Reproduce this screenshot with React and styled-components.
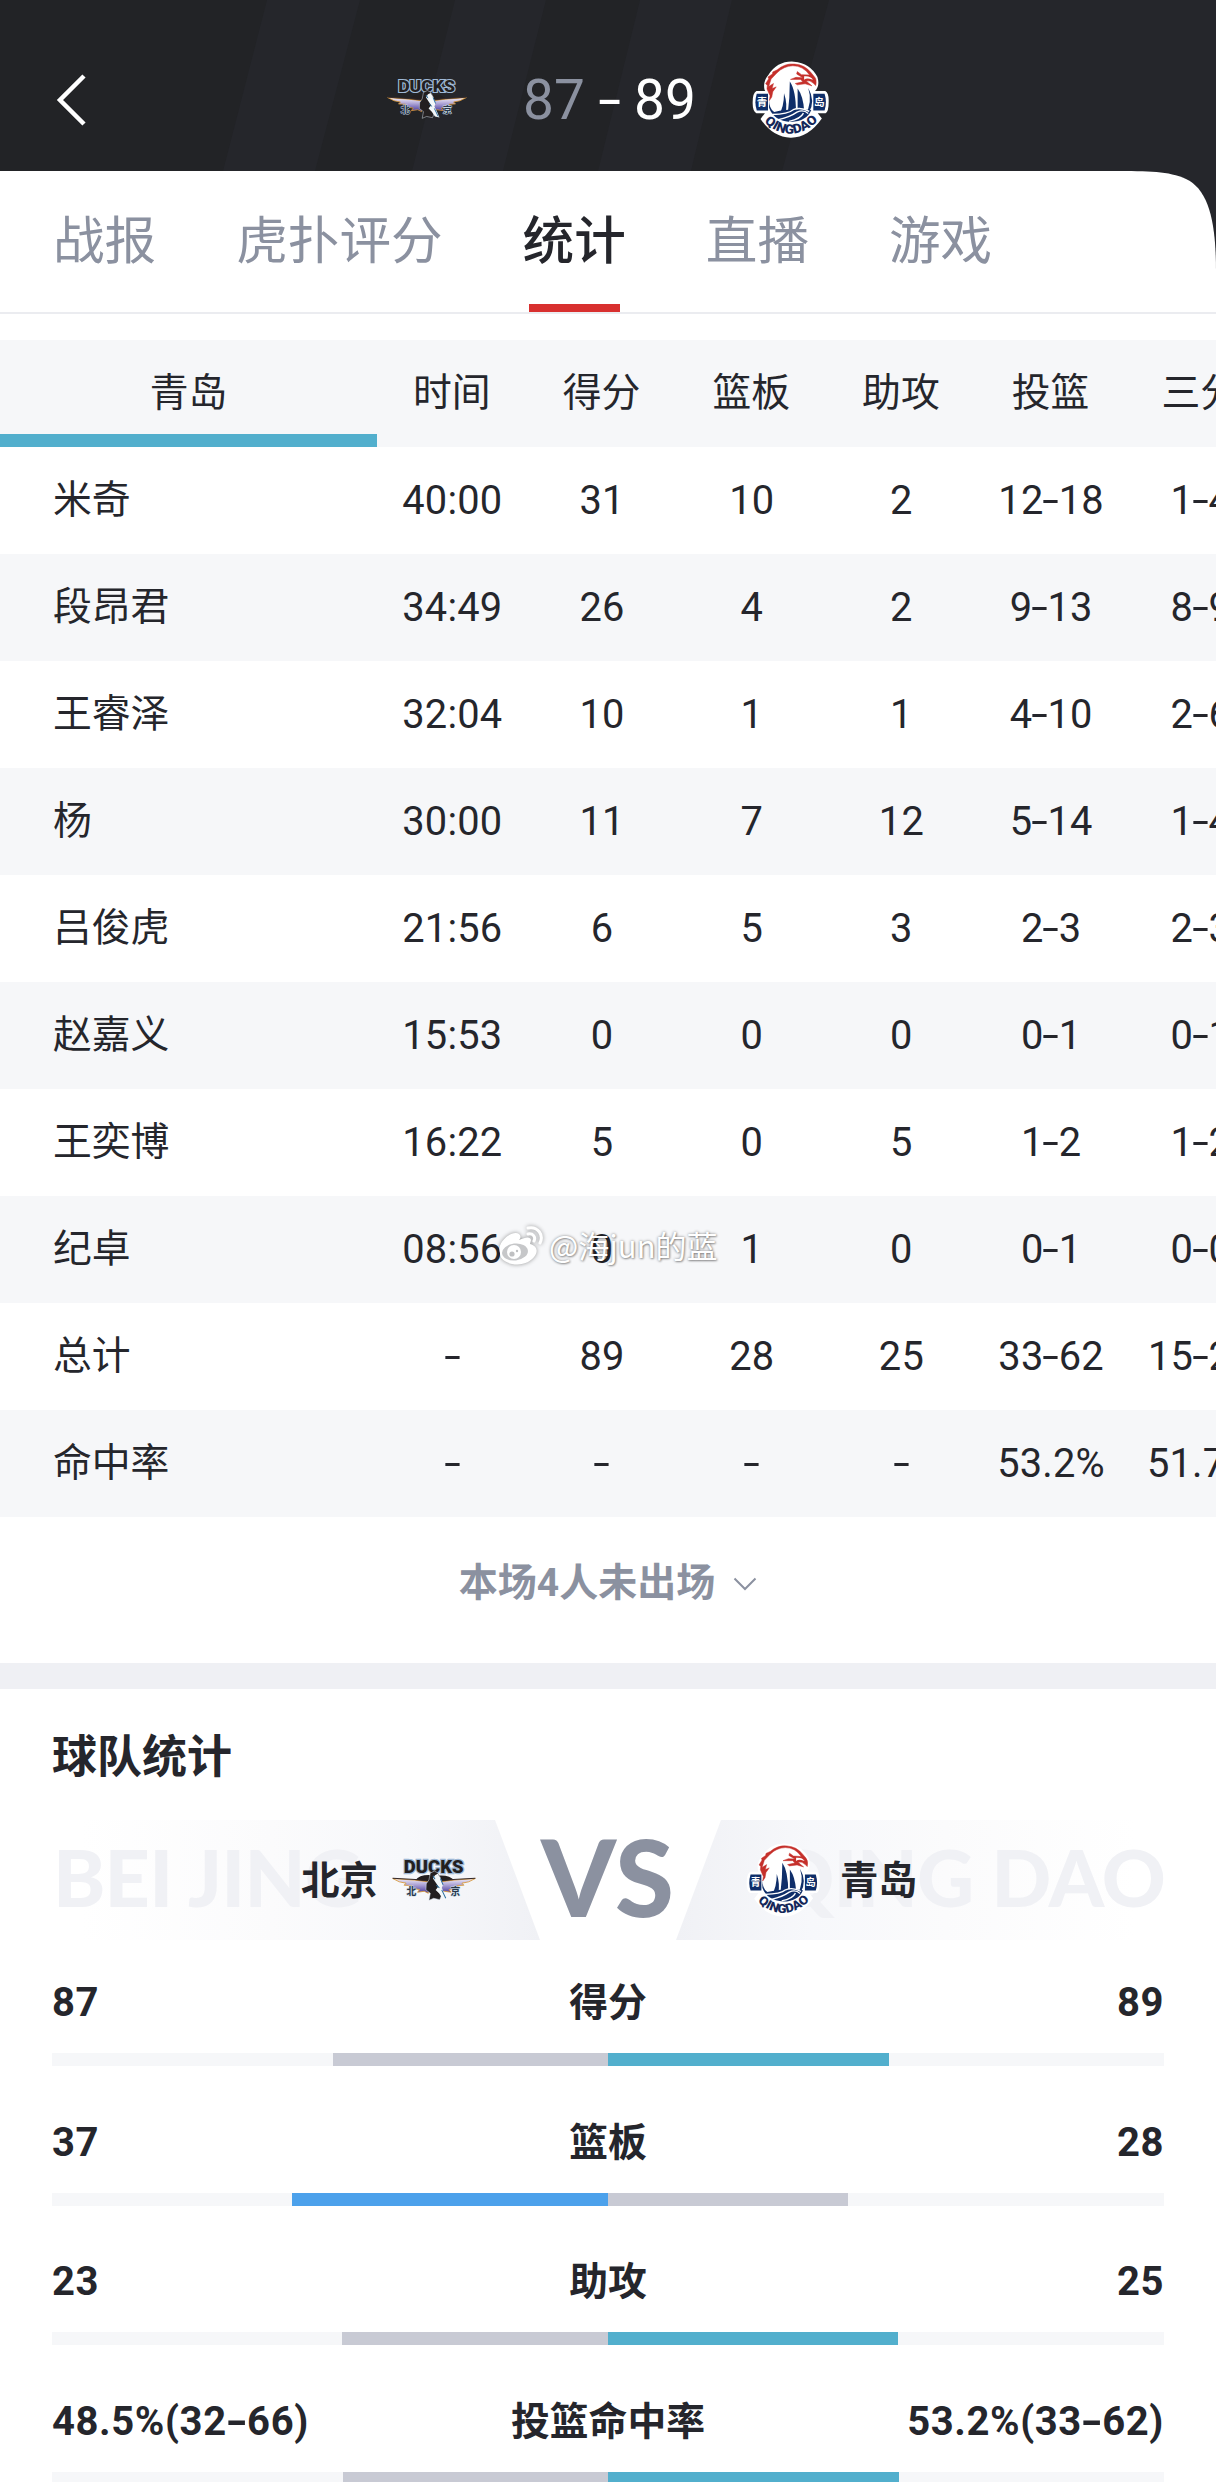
import React from 'react';
import styled, { createGlobalStyle } from 'styled-components';

const tabs = ['战报', '虎扑评分', '统计', '直播', '游戏'];

const columns = ['时间', '得分', '篮板', '助攻', '投篮', '三分'];

const players = [
  { name: '米奇', stats: ['40:00', '31', '10', '2', '12-18', '1-4'] },
  { name: '段昂君', stats: ['34:49', '26', '4', '2', '9-13', '8-9'] },
  { name: '王睿泽', stats: ['32:04', '10', '1', '1', '4-10', '2-6'] },
  { name: '杨', stats: ['30:00', '11', '7', '12', '5-14', '1-4'] },
  { name: '吕俊虎', stats: ['21:56', '6', '5', '3', '2-3', '2-3'] },
  { name: '赵嘉义', stats: ['15:53', '0', '0', '0', '0-1', '0-1'] },
  { name: '王奕博', stats: ['16:22', '5', '0', '5', '1-2', '1-2'] },
  { name: '纪卓', stats: ['08:56', '0', '1', '0', '0-1', '0-0'] },
  { name: '总计', stats: ['-', '89', '28', '25', '33-62', '15-29'] },
  { name: '命中率', stats: ['-', '-', '-', '-', '53.2%', '51.7%'] },
];

const teamStats = [
  { label: '得分', home: '87', away: '89', homeValue: 87, awayValue: 89 },
  { label: '篮板', home: '37', away: '28', homeValue: 37, awayValue: 28 },
  { label: '助攻', home: '23', away: '25', homeValue: 23, awayValue: 25 },
  { label: '投篮命中率', home: '48.5%(32-66)', away: '53.2%(33-62)', homeValue: 48.5, awayValue: 53.2 },
];

const GlobalStyle = createGlobalStyle`
  * {
    box-sizing: border-box;
  }

  body {
    margin: 0;
    background: #fff;
    color: #25262c;
    font-family: Roboto, "Noto Sans CJK SC", sans-serif;
  }
`;

const Page = styled.div`
  width: 1216px;
  height: 2482px;
  overflow: hidden;
  background: #25262b;
`;

const Header = styled.header`
  position: relative;
  height: 171px;
  background: #222326;
`;

const Stripes = styled.svg`
  position: absolute;
  top: 0;
  left: 0;
`;

const HeaderContent = styled.div`
  position: relative;
  display: grid;
  grid-template-columns: 387px 1fr 387px;
  align-items: center;
  height: 171px;
  padding-top: 28px;
`;

const BackButton = styled.button`
  display: flex;
  margin-left: 56px;
  padding: 0;
  border: 0;
  background: none;
`;

const ScoreBoard = styled.div`
  display: flex;
  align-items: center;
  justify-content: space-between;
`;

const Score = styled.div`
  display: flex;
  align-items: center;
  gap: 17px;
  color: #fff;
  font-size: 55px;
  font-weight: 400;
  line-height: 60px;
`;

const ScoreNumber = styled.span`
  color: ${({ $lost }) => ($lost ? '#8b91a0' : '#fff')};
`;

const ScoreDash = styled.span`
  display: inline-block;
  transform: scaleX(1.5);
`;

const Panel = styled.main`
  height: 2311px;
  background: #fff;
  clip-path: path('M0 0H1112C1150 0 1168 0 1186 8C1207 18 1216 46 1216 100V2311H0Z');
`;

const TabBar = styled.nav`
  display: flex;
  gap: 80px;
  height: 143px;
  padding-left: 53px;
  border-bottom: 2px solid #ebecf0;
`;

const Tab = styled.div`
  display: flex;
  flex-direction: column;
  align-items: center;
  justify-content: space-between;
  height: 141px;
  color: ${({ $active }) => ($active ? '#25262c' : '#8b91a0')};
  font-size: 51.6px;
  font-weight: ${({ $active }) => ($active ? 500 : 400)};
  line-height: 142px;

  &::after {
    content: '';
    flex: none;
    width: 91px;
    height: 8px;
    margin-top: -9px;
    background: ${({ $active }) => ($active ? '#d8302f' : 'transparent')};
  }
`;

const Table = styled.section`
  margin-top: 26px;
  overflow: hidden;
`;

const TableRow = styled.div`
  display: grid;
  grid-template-columns: 377px repeat(6, 149.7px);
  height: 107px;
  background: ${({ $shaded }) => ($shaded ? '#f6f7f9' : '#fff')};
  font-size: 38.8px;
  line-height: 106px;
`;

const TeamCell = styled.div`
  height: 107px;
  border-bottom: 13px solid #52afcd;
  text-align: center;
`;

const NameCell = styled.div`
  padding-left: 53px;
`;

const Cell = styled.div`
  text-align: center;
  white-space: nowrap;
`;

const NumberCell = styled(Cell)`
  padding-left: 1px;
  font-size: 39.8px;
  letter-spacing: 0.2px;
  line-height: 107px;
`;

const Dash = styled.span`
  display: inline-block;
  margin: 0 2px;
  transform: scaleX(1.5);
`;

const AbsentToggle = styled.div`
  display: flex;
  align-items: center;
  justify-content: center;
  gap: 18px;
  height: 146px;
  color: #8b91a0;
  font-size: 39px;
  font-weight: 700;
  line-height: 128px;

  span {
    margin-top: -14px;
  }

  svg {
    margin-top: -12px;
  }
`;

const Divider = styled.div`
  height: 26px;
  background: #eff0f4;
`;

const SectionTitle = styled.h2`
  margin: 0;
  padding-left: 52px;
  height: 131px;
  font-size: 45px;
  font-weight: 700;
  line-height: 137px;
`;

const Versus = styled.div`
  display: flex;
  justify-content: space-between;
  height: 120px;
`;

const TeamBand = styled.div`
  position: relative;
  display: flex;
  flex: none;
  flex-direction: ${({ $away }) => ($away ? 'row-reverse' : 'row')};
  align-items: center;
  justify-content: flex-end;
  gap: ${({ $away }) => ($away ? '20px' : '14px')};
  width: 540px;
  padding: ${({ $away }) => ($away ? '0 0 0 70px' : '0 64px 0 0')};
  background: linear-gradient(
    ${({ $away }) => ($away ? '270deg' : '90deg')},
    #fff 15%,
    #fbfbfc 50%,
    #f7f8fb 75%,
    #f0f1f5 100%
  );
  clip-path: ${({ $away }) =>
    $away
      ? 'polygon(45px 0, 100% 0, 100% 100%, 0 100%)'
      : 'polygon(0 0, 495px 0, 100% 100%, 0 100%)'};
`;

const Pinyin = styled.span`
  position: absolute;
  top: 9px;
  ${({ $away }) => ($away ? 'right: 51px;' : 'left: 53px;')}
  color: #f0f1f5;
  font-family: Lato, sans-serif;
  font-size: 79px;
  font-weight: 900;
  letter-spacing: -0.8px;
  line-height: 96px;
  white-space: nowrap;
`;

const TeamName = styled.span`
  position: relative;
  margin-top: -7px;
  font-size: 38.5px;
  font-weight: 700;
`;

const VersusMark = styled.div`
  color: #8b91a0;
  font-family: Lato, sans-serif;
  font-size: 107px;
  font-weight: 900;
  letter-spacing: 1px;
  line-height: 112px;
`;

const StatList = styled.div`
  padding: 0 52px;
`;

const StatItem = styled.div`
  height: 139.67px;
`;

const StatText = styled.div`
  display: grid;
  grid-template-columns: 1fr auto 1fr;
  height: 113px;
  font-size: 38.8px;
  font-weight: 700;
  line-height: 125px;
`;

const StatValue = styled.span`
  font-size: 40px;
  letter-spacing: 0.6px;
  text-align: ${({ $right }) => ($right ? 'right' : 'left')};
`;

const Bar = styled.div`
  display: grid;
  grid-template-columns: 1fr 1fr;
  height: 13px;
  background: #f6f7f9;
`;

const BarFill = styled.div`
  height: 13px;
  justify-self: ${({ $side }) => ($side === 'home' ? 'end' : 'start')};
  background: ${({ $win, $side }) => {
    if (!$win) return '#c8cad4';
    return $side === 'home' ? '#4ca1eb' : '#52afcd';
  }};
`;

const Watermark = styled.div`
  position: absolute;
  top: 1223px;
  left: 497px;
  display: flex;
  align-items: center;
  gap: 5px;
  color: #fff;
  font-family: "Noto Sans CJK SC", sans-serif;
  font-size: 31px;
  line-height: 44px;
  text-shadow: 0 0 3px rgba(0, 0, 0, 0.45), 1px 1px 2px rgba(0, 0, 0, 0.3);
  white-space: nowrap;

  svg {
    filter: drop-shadow(0 0 2px rgba(0, 0, 0, 0.4));
  }
`;

const Logo = styled.svg`
  position: relative;
  flex: none;
  overflow: visible;
`;

const DucksLogo = ({ width }) => (
  <Logo width={width} height={width * 0.504} viewBox="36 88 250 126">
    <defs>
      <linearGradient id="wing" x1="0" y1="0" x2="0" y2="1">
        <stop offset="0" stopColor="#f4eff8" />
        <stop offset="0.45" stopColor="#aaa0d4" />
        <stop offset="1" stopColor="#43349a" />
      </linearGradient>
    </defs>
    <path d="M105 152Q118 135 148 136L160 128L176 137Q208 135 222 152L180 160H145Z" fill="#231f20" />
    <path
      d="M38 146L104 151L145 156L144 190L132 184L112 187L118 179L88 174L94 167L72 166L78 160L58 156Z"
      fill="url(#wing)"
      stroke="#d89632"
      strokeWidth="2.5"
    />
    <path
      d="M284 146L218 151L180 156L180 190L192 184L212 187L206 179L236 174L230 167L250 166L244 160L264 156Z"
      fill="url(#wing)"
      stroke="#d89632"
      strokeWidth="2.5"
    />
    <path d="M38 145L105 149L140 153M284 145L218 149L184 153" fill="none" stroke="#34292b" strokeWidth="3" />
    <text
      x="71"
      y="130"
      textLength="178"
      lengthAdjust="spacingAndGlyphs"
      fill="#231f20"
      stroke="#9fb9d7"
      strokeWidth="7"
      paintOrder="stroke"
      fontFamily="Roboto, sans-serif"
      fontSize="53"
      fontWeight="900"
    >
      DUCKS
    </text>
    <path
      d="M150 130L162 124L172 129L180 144L176 158L184 174L186 190L178 209L160 205L146 211L150 190L137 180L138 162L146 150Z"
      fill="#231f20"
      stroke="#d8e2ec"
      strokeWidth="1.5"
    />
    <path
      d="M164 136L172 132L181 146L188 164L184 174L193 192L200 208L186 205L176 190L166 180L174 170L166 158L158 146Z"
      fill="#f3f7f9"
    />
    <path d="M158 138L164 148M180 146L188 165M184 180L196 205M168 166L177 174" fill="none" stroke="#286b9d" strokeWidth="3" />
    <g fill="#26374c" stroke="#c7d6e4" strokeWidth="3" paintOrder="stroke" fontFamily="'Noto Sans CJK SC', sans-serif" fontSize="29" fontWeight="700">
      <text x="79" y="195">北</text>
      <text x="210" y="195">京</text>
    </g>
  </Logo>
);

const QingdaoLogo = ({ width }) => (
  <Logo width={width} height={width} viewBox="37 37 226 226">
    <defs>
      <path id="nameArc" d="M69 213Q150 288 231 213" />
    </defs>
    {/* white backing behind the badge */}
    <path
      d="M74 122Q68 98 85 78Q112 36 160 39Q208 43 229 84Q237 110 222 125H252Q263 130 262 157Q262 186 253 190H230L242 206Q202 263 150 262Q98 261 62 207L75 190H50Q38 184 39 157Q39 131 50 125H76Z"
      fill="#fff"
    />
    <g fill="#0f2e69">
      <path d="M51 133H84V182H51Q43 158 51 133Z" />
      <path d="M217 133H250Q258 158 250 182H217Z" />
    </g>
    <g fill="#fff" fontFamily="'Noto Sans CJK SC', sans-serif" fontSize="31" fontWeight="700">
      <text x="51" y="169">青</text>
      <text x="219" y="169">岛</text>
    </g>
    <ellipse cx="150" cy="158" rx="64" ry="57" fill="#fff" />
    <path d="M202 116Q224 154 204 188L192 199Q216 158 202 116Z" fill="#0f2e69" />
    <path d="M87 150Q87 176 102 187Q150 174 211 181Q198 214 151 216Q101 213 87 174Z" fill="#0f2e69" />
    <path d="M148 97Q166 123 166 187L142 191Q148 145 148 97Z" fill="#0f2e69" />
    <path d="M131 132Q142 165 135 192L115 197Q131 174 131 132Z" fill="#0f2e69" />
    <path d="M171 118Q187 140 190 182L171 185Z" fill="#0f2e69" />
    <path d="M96 194Q143 193 158 180Q180 171 205 185M115 209Q149 201 169 187Q188 178 202 191M146 214Q180 207 188 190" fill="none" stroke="#fff" strokeWidth="4" />
    {/* eagle head: thin outline, heavier feathers at the neck */}
    <path
      d="M90 139L81 119L82 108L77 104L86 89L84 84L97 75L98 69L111 63Q134 43 162 46Q192 48 210 71L220 83Q228 91 224 109L217 102Q207 92 196 96L213 110L193 104L170 107L164 103L186 98L180 91L150 91L166 85L186 86L168 75L170 68L182 77L206 78Q187 51 157 51Q130 52 110 72L93 90L86 112L100 103L96 118L108 113L98 127L95 143L88 153Z"
      fill="#c5302b"
      stroke="#c5302b"
      strokeWidth="1.5"
    />
    <path d="M190 82Q209 80 216 92L206 89Q196 87 190 92Z" fill="#fff" />
    <text fill="#142759" fontFamily="Roboto, sans-serif" fontSize="38" fontWeight="900">
      <textPath href="#nameArc" startOffset="5" textLength="178" lengthAdjust="spacingAndGlyphs">QINGDAO</textPath>
    </text>
  </Logo>
);

// dashes between numbers are drawn wider than the font's hyphen
const getNumbers = (text) => text.split(/(-)/).map((part, idx) => (
  part === '-' ? <Dash key={idx}>-</Dash> : part
));

const App = () => {
  const getRows = () => players.map((player, idx) => (
    <TableRow key={player.name} $shaded={idx % 2 === 1}>
      <NameCell>{player.name}</NameCell>
      {player.stats.map((stat, i) => <NumberCell key={i}>{getNumbers(stat)}</NumberCell>)}
    </TableRow>
  ));

  const getStats = () => teamStats.map(({ label, home, away, homeValue, awayValue }) => {
    const total = homeValue + awayValue;
    return (
      <StatItem key={label}>
        <StatText>
          <StatValue>{getNumbers(home)}</StatValue>
          <span>{label}</span>
          <StatValue $right>{getNumbers(away)}</StatValue>
        </StatText>
        <Bar>
          <BarFill $side="home" $win={homeValue > awayValue} style={{ width: `${(homeValue / total) * 100}%` }} />
          <BarFill $side="away" $win={awayValue > homeValue} style={{ width: `${(awayValue / total) * 100}%` }} />
        </Bar>
      </StatItem>
    );
  });

  return (
    <>
      <GlobalStyle />
      <Page>
        <Header>
          <Stripes width="1216" height="171" viewBox="0 0 1216 171">
            <path d="M267 0H360L315 171H223ZM455 0H546L503 171H412ZM640 0H732L691 171H598ZM829 0H1216V171H782Z" fill="#25262b" />
          </Stripes>
          <HeaderContent>
            <BackButton>
              <svg width="32" height="52" viewBox="0 0 32 52">
                <path d="M28 2L4 26L28 50" fill="none" stroke="#fff" strokeWidth="4.5" />
              </svg>
            </BackButton>
            <ScoreBoard>
              <DucksLogo width={80} />
              <Score>
                <ScoreNumber $lost>87</ScoreNumber>
                <ScoreDash>-</ScoreDash>
                <ScoreNumber>89</ScoreNumber>
              </Score>
              <QingdaoLogo width={77} />
            </ScoreBoard>
          </HeaderContent>
        </Header>

        <Panel>
          <TabBar>
            {tabs.map((tab) => <Tab key={tab} $active={tab === '统计'}>{tab}</Tab>)}
          </TabBar>

          <Table>
            <TableRow $shaded>
              <TeamCell>青岛</TeamCell>
              {columns.map((column) => <Cell key={column}>{column}</Cell>)}
            </TableRow>
            {getRows()}
          </Table>

          <AbsentToggle>
            <span>本场4人未出场</span>
            <svg width="24" height="14" viewBox="0 0 24 14">
              <path d="M1.5 1.5L12 12L22.5 1.5" fill="none" stroke="#8b91a0" strokeWidth="2" />
            </svg>
          </AbsentToggle>

          <Divider />

          <SectionTitle>球队统计</SectionTitle>
          <Versus>
            <TeamBand>
              <Pinyin>BEI JING</Pinyin>
              <TeamName>北京</TeamName>
              <DucksLogo width={84} />
            </TeamBand>
            <VersusMark>VS</VersusMark>
            <TeamBand $away>
              <Pinyin $away>QING DAO</Pinyin>
              <TeamName>青岛</TeamName>
              <QingdaoLogo width={74} />
            </TeamBand>
          </Versus>
          <StatList>{getStats()}</StatList>
        </Panel>

        <Watermark>
          <svg width="47" height="40" viewBox="0 0 47 40">
            <path d="M3 28C-1 17 16 4 22 9Q25 12 22 15Q33 10 34 15L33 19C44 22 40 32 31 37C19 43 2 37 3 28Z" fill="#fff" />
            <ellipse cx="18" cy="27" rx="13" ry="8.5" fill="#c6c7c9" transform="rotate(-7 18 27)" />
            <circle cx="17" cy="27" r="7" fill="#fff" />
            <circle cx="15" cy="29" r="2.6" fill="#bfc0c2" />
            <circle cx="20" cy="26" r="1.2" fill="#bfc0c2" />
            <path d="M31 3C41 1 47 10 43 18M31 9C36 8 39 12 37 16" fill="none" stroke="#fff" strokeWidth="3" strokeLinecap="round" />
          </svg>
          @海jun的蓝
        </Watermark>
      </Page>
    </>
  );
};

export default App;
